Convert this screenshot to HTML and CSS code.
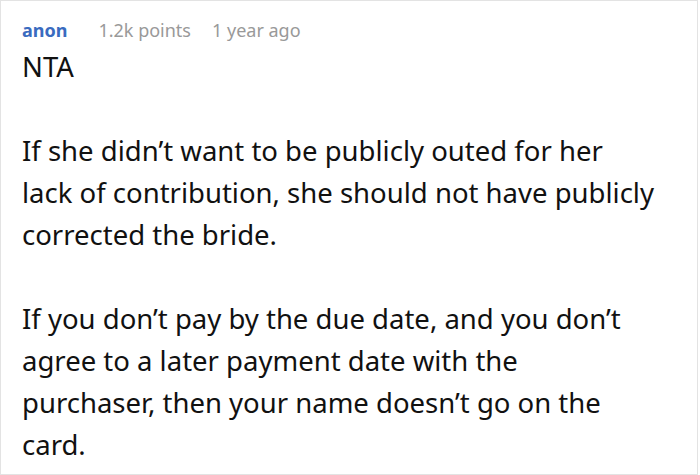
FILE: index.html
```html
<!DOCTYPE html>
<html>
<head>
<meta charset="utf-8">
<link rel="stylesheet" href="styles.css">
</head>
<body>
<div class="comment">
  <div class="meta">
    <span class="author">anon</span>
    <span class="points">1.2k points</span>
    <span class="time">1 year ago</span>
  </div>
  <div class="text">
    <p>NTA</p>
    <p>If she didn’t want to be publicly outed for her lack of contribution, she should not have publicly corrected the bride.</p>
    <p>If you don’t pay by the due date, and you don’t agree to a later payment date with the purchaser, then your name doesn’t go on the card.</p>
  </div>
</div>
</body>
</html>
```
FILE: styles.css
```css
html, body {
  margin: 0;
  padding: 0;
  background: #fff;
}
.comment {
  box-sizing: border-box;
  width: 698px;
  height: 475px;
  border: 1px solid #e3e3e3;
  padding: 16px 41px 0 21px;
  font-family: "Noto Sans", "Open Sans", sans-serif;
  color: #111;
  overflow: hidden;
}
.meta {
  display: flex;
  font-size: 18px;
  line-height: 26px;
  margin-bottom: 3px;
}
.author {
  color: #3a6bbf;
  font-weight: bold;
  margin-right: 31px;
}
.points {
  color: #999;
  margin-right: 21px;
}
.time {
  color: #999;
}
.text {
  font-size: 27.5px;
  line-height: 42px;
}
.text p {
  margin: 0 0 42px;
}
```
